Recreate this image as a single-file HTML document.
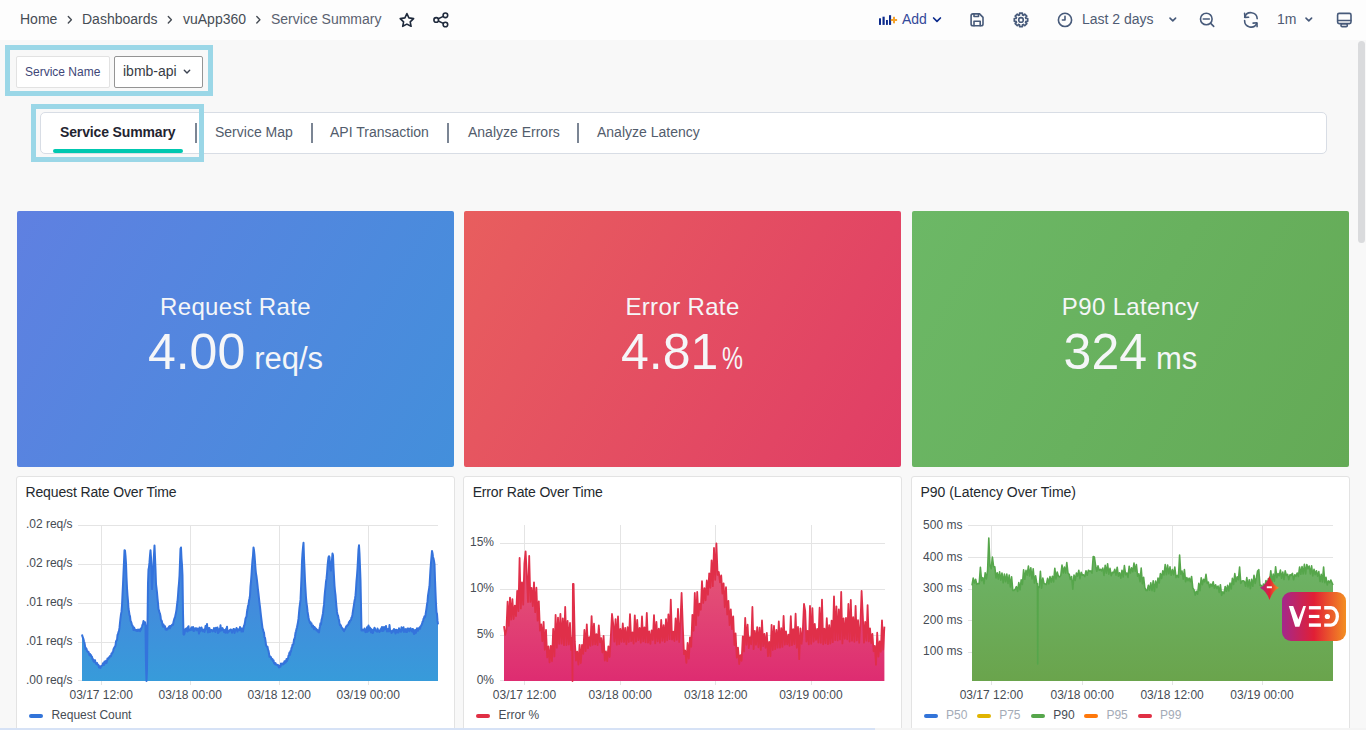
<!DOCTYPE html>
<html><head><meta charset="utf-8">
<style>
*{margin:0;padding:0;box-sizing:border-box}
html,body{width:1366px;height:730px;overflow:hidden}
body{background:#f8f8f8;font-family:"Liberation Sans",sans-serif;position:relative;color:#464c54}
.a{position:absolute;white-space:nowrap}
#hdr{position:absolute;left:0;top:0;width:1366px;height:40px;background:#fdfdfd}
.bc{font-size:14px;line-height:16px;top:11px;color:#464c54}
.chev{top:14px}
.cyan{position:absolute;border:5px solid #9bd7e7}
.tabs{position:absolute;left:40px;top:112px;width:1287px;height:42px;background:#fff;border:1px solid #d8dde5;border-radius:5px}
.tab{font-size:14px;line-height:16px;top:124px;color:#525c6c}
.sep{position:absolute;top:123px;width:2px;height:20px;background:#7b8594}
.stat{position:absolute;top:211px;height:256px;border-radius:2px;color:#f5f6f8;text-align:center}
.st{position:absolute;left:0;right:0;top:82px;font-size:24px;line-height:28px;letter-spacing:0.35px}
.sv{position:absolute;left:0;right:0;top:111px;height:60px;display:flex;justify-content:center;align-items:baseline}
.sv .n{font-size:50px;line-height:60px}
.sv .u{font-size:31px;line-height:40px;margin-left:9px}
.ts{position:absolute;top:476px;height:260px;background:#fff;border:1px solid #e3e3e3;border-radius:3px}
.pt{font-size:14px;line-height:16px;color:#24292e}
.ax{font-size:12px;line-height:14px;color:#464c54}
</style></head><body>
<div id="hdr"></div>
<svg class="a" style="left:0;top:0" width="1366" height="40" viewBox="0 0 1366 40">
<g fill="none" stroke="#464c54" stroke-width="1.4" stroke-linecap="round" stroke-linejoin="round">
<path d="M68.3 16.6 L71.4 19.8 L68.3 23"/>
<path d="M168.3 16.6 L171.4 19.8 L168.3 23"/>
<path d="M256.8 16.6 L259.9 19.8 L256.8 23"/>
</g>
<g fill="none" stroke="#1f2a3c" stroke-width="1.6" stroke-linejoin="round">
<path d="M406.9 13.6 L408.9 17.9 L413.6 18.6 L410.2 21.9 L411.1 26.3 L406.9 24.1 L402.7 26.3 L403.6 21.9 L400.2 18.6 L404.9 17.9 Z"/>
<circle cx="445.4" cy="15.3" r="2.3"/><circle cx="436.2" cy="19.9" r="2.3"/><circle cx="445.4" cy="24.5" r="2.3"/>
<path d="M438.3 18.8 L443.3 16.4 M438.3 21 L443.3 23.4"/>
</g>
<g fill="#0b2a8c"><rect x="879" y="18.3" width="2" height="6.6"/><rect x="882.5" y="16.7" width="2.2" height="8.2"/><rect x="886" y="20" width="1.9" height="4.9"/><rect x="889" y="15.2" width="2.1" height="9.7"/></g>
<g fill="#f5a22a"><rect x="890.8" y="19" width="6.3" height="2"/><rect x="893" y="16.8" width="2" height="6.5"/></g>
<path d="M933.6 18 L937 21.3 L940.4 18" fill="none" stroke="#0b2a8c" stroke-width="1.7" stroke-linecap="round" stroke-linejoin="round"/>
<g fill="none" stroke="#475a7a" stroke-width="1.6" stroke-linecap="round" stroke-linejoin="round">
<path d="M973.4 13.9 L979.6 13.9 L983 17.4 L983 23.9 Q983 25.8 981.1 25.8 L973 25.8 Q971.1 25.8 971.1 23.9 L971.1 15.8 Q971.1 13.9 973 13.9 Z"/>
<path d="M974 14 L974 16.5 L978.5 16.5 L978.5 14"/>
<path d="M974 25.7 L974 21.3 L980.2 21.3 L980.2 25.7"/>
<circle cx="1021" cy="19.9" r="2.3"/>
<path d="M1019.55 15.01 L1019.55 13.15 L1022.45 13.15 L1022.45 15.01 A5.1 5.1 0 0 1 1023.43 15.42 L1024.75 14.10 L1026.80 16.15 L1025.48 17.47 A5.1 5.1 0 0 1 1025.89 18.45 L1027.75 18.45 L1027.75 21.35 L1025.89 21.35 A5.1 5.1 0 0 1 1025.48 22.33 L1026.80 23.65 L1024.75 25.70 L1023.43 24.38 A5.1 5.1 0 0 1 1022.45 24.79 L1022.45 26.65 L1019.55 26.65 L1019.55 24.79 A5.1 5.1 0 0 1 1018.57 24.38 L1017.25 25.70 L1015.20 23.65 L1016.52 22.33 A5.1 5.1 0 0 1 1016.11 21.35 L1014.25 21.35 L1014.25 18.45 L1016.11 18.45 A5.1 5.1 0 0 1 1016.52 17.47 L1015.20 16.15 L1017.25 14.10 L1018.57 15.42 A5.1 5.1 0 0 1 1019.55 15.01 Z"/>
<circle cx="1065" cy="19.9" r="6.6"/>
<path d="M1065 16.3 L1065 20 L1062.4 20"/>
<path d="M1170 18.1 L1172.8 20.9 L1175.6 18.1"/>
<circle cx="1206.3" cy="19" r="5.8"/>
<path d="M1203.3 19 L1209.3 19 M1210.7 23.4 L1213.7 26.4"/>
<path d="M1244.7 17.2 A6.4 6.4 0 0 1 1257.2 18.6"/>
<path d="M1244.6 20.6 A6.4 6.4 0 0 0 1256.8 23.4"/>
<path d="M1244.6 13.3 L1244.9 17.4 L1248.6 17.2"/>
<path d="M1257.1 26.6 L1256.9 22.8 L1253.1 23.1"/>
<path d="M1306 18.1 L1308.8 20.9 L1311.6 18.1"/>
<rect x="1337.6" y="13.4" width="13.4" height="10.2" rx="1.5"/>
<path d="M1337.8 20.5 L1350.8 20.5"/>
<rect x="1341" y="23.8" width="6.3" height="2.8" rx="1.2"/>
</g>
</svg>
<div class="a" style="left:902px;top:11px;font-size:14px;line-height:16px;color:#34499a">Add</div>
<div class="a" style="left:1082px;top:11px;font-size:14px;line-height:16px;color:#4f5b73">Last 2 days</div>
<div class="a" style="left:1277px;top:11px;font-size:14px;line-height:16px;color:#4f5b73">1m</div>
<div class="a bc" style="left:20px">Home</div>
<div class="a bc" style="left:82px">Dashboards</div>
<div class="a bc" style="left:183px">vuApp360</div>
<div class="a bc" style="left:271px;color:#5a6170">Service Summary</div>

<div class="cyan" style="left:5px;top:45px;width:208px;height:51px"></div>
<div class="a" style="left:16px;top:56px;width:94px;height:32px;background:#fff;border:1px solid #e2e2e2;border-radius:2px"></div>
<div class="a" style="left:25px;top:65px;font-size:12px;line-height:14px;color:#3e4677">Service Name</div>
<div class="a" style="left:114px;top:56px;width:89px;height:32px;background:#fff;border:1px solid #949494;border-radius:2px"></div>
<div class="a" style="left:123px;top:63px;font-size:14px;line-height:16px;color:#383c44">ibmb-api</div>
<svg class="a" style="left:180px;top:64px" width="14" height="14" viewBox="180 64 14 14"><path d="M184.3 70.2 L187 72.9 L189.7 70.2" fill="none" stroke="#3b4250" stroke-width="1.4" stroke-linecap="round" stroke-linejoin="round"/></svg>

<div class="tabs"></div>
<div class="cyan" style="left:31px;top:104px;width:173px;height:58px"></div>
<div class="a tab" style="left:60px;font-weight:bold;color:#1f2430;letter-spacing:-0.14px">Service Summary</div>
<div class="a" style="left:53px;top:149px;width:130px;height:4px;border-radius:2px;background:#00c8b0"></div>
<div class="sep" style="left:195px"></div>
<div class="a tab" style="left:215px">Service Map</div>
<div class="sep" style="left:311px"></div>
<div class="a tab" style="left:330px">API Transaction</div>
<div class="sep" style="left:447px"></div>
<div class="a tab" style="left:468px">Analyze Errors</div>
<div class="sep" style="left:577px"></div>
<div class="a tab" style="left:597px">Analyze Latency</div>

<div class="stat" style="left:17px;width:437px;background:linear-gradient(120deg,#5f80e1,#438fdb)"><div class="st">Request Rate</div><div class="sv"><span class="n">4.00</span><span class="u">req/s</span></div></div>
<div class="stat" style="left:464px;width:437px;background:linear-gradient(120deg,#e85e5e,#e03d66)"><div class="st">Error Rate</div><div class="sv"><span class="n">4.81</span><span class="u" style="display:inline-block;transform:scaleX(0.76);transform-origin:left;margin-right:-6px;margin-left:4px">%</span></div></div>
<div class="stat" style="left:912px;width:437px;background:linear-gradient(120deg,#6cb866,#64aa56)"><div class="st">P90 Latency</div><div class="sv"><span class="n">324</span><span class="u">ms</span></div></div>

<div class="ts" style="left:16px;width:439px"></div>
<div class="ts" style="left:463px;width:439px"></div>
<div class="ts" style="left:911px;width:439px"></div>

<!--CHARTS_START-->
<svg class="a" style="left:0;top:470px" width="1366" height="260" viewBox="0 470 1366 260" font-family="Liberation Sans, sans-serif">
<defs>
<linearGradient id="gb" x1="0" y1="540" x2="0" y2="681" gradientUnits="userSpaceOnUse"><stop offset="0" stop-color="#4c7fde"/><stop offset="1" stop-color="#379bda"/></linearGradient>
<linearGradient id="gr" x1="0" y1="543" x2="0" y2="681" gradientUnits="userSpaceOnUse"><stop offset="0" stop-color="#e55f78"/><stop offset="1" stop-color="#de2c71"/></linearGradient>
<linearGradient id="gg" x1="0" y1="540" x2="0" y2="681" gradientUnits="userSpaceOnUse"><stop offset="0" stop-color="#6db66b"/><stop offset="1" stop-color="#6aa44c"/></linearGradient>
<linearGradient id="ved" x1="0" y1="0" x2="1" y2="0"><stop offset="0" stop-color="#a4288c"/><stop offset="0.5" stop-color="#e11f35"/><stop offset="1" stop-color="#f38f22"/></linearGradient>
</defs>
<g font-size="14" fill="#24292e">
<text x="25.5" y="497" letter-spacing="-0.14">Request Rate Over Time</text>
<text x="472.7" y="497" letter-spacing="-0.16">Error Rate Over Time</text>
<text x="920.4" y="497">P90 (Latency Over Time)</text>
</g>
<g stroke="#e4e4e4" stroke-width="1" shape-rendering="crispEdges">
<line x1="78" y1="525" x2="438" y2="525"/><line x1="78" y1="564" x2="438" y2="564"/><line x1="78" y1="603" x2="438" y2="603"/><line x1="78" y1="642" x2="438" y2="642"/>
<line x1="101.5" y1="525" x2="101.5" y2="685"/><line x1="190.5" y1="525" x2="190.5" y2="685"/><line x1="279.5" y1="525" x2="279.5" y2="685"/><line x1="368.5" y1="525" x2="368.5" y2="685"/>
<line x1="500" y1="543" x2="885" y2="543"/><line x1="500" y1="589" x2="885" y2="589"/><line x1="500" y1="635" x2="885" y2="635"/>
<line x1="524.5" y1="525" x2="524.5" y2="685"/><line x1="620.5" y1="525" x2="620.5" y2="685"/><line x1="715.5" y1="525" x2="715.5" y2="685"/><line x1="811.5" y1="525" x2="811.5" y2="685"/>
<line x1="968" y1="525" x2="1333" y2="525"/><line x1="968" y1="557" x2="1333" y2="557"/><line x1="968" y1="589" x2="1333" y2="589"/><line x1="968" y1="620" x2="1333" y2="620"/><line x1="968" y1="652" x2="1333" y2="652"/>
<line x1="991.5" y1="525" x2="991.5" y2="685"/><line x1="1082.5" y1="525" x2="1082.5" y2="685"/><line x1="1172.5" y1="525" x2="1172.5" y2="685"/><line x1="1262.5" y1="525" x2="1262.5" y2="685"/>
</g>
<g stroke="#e4e4e4" shape-rendering="crispEdges">
<line x1="78" y1="680" x2="82" y2="680"/><line x1="500" y1="680" x2="504" y2="680"/>
</g>
<path d="M82.0,681 L82.0,634.5 82.5,636.7 83.0,638.0 83.5,639.2 84.0,641.5 84.5,642.9 85.0,645.8 85.5,649.0 86.0,648.2 86.5,648.9 87.0,650.8 87.5,651.5 88.0,652.1 88.5,651.9 89.0,653.6 89.5,655.2 90.0,654.0 90.5,655.7 91.0,655.1 91.5,656.5 92.0,656.8 92.5,659.3 93.0,659.1 93.5,661.4 94.0,661.7 94.5,661.9 95.0,660.1 95.5,662.5 96.0,663.5 96.5,664.2 97.0,663.0 97.5,664.6 98.0,664.6 98.5,665.2 99.0,667.6 99.5,666.2 100.0,667.5 100.5,667.9 101.0,665.9 101.5,665.9 102.0,665.6 102.5,665.1 103.0,663.3 103.5,664.1 104.0,664.9 104.5,661.5 105.0,663.4 105.5,662.1 106.0,660.9 106.5,663.0 107.0,661.1 107.5,658.4 108.0,659.0 108.5,658.8 109.0,657.3 109.5,657.5 110.0,656.1 110.5,656.1 111.0,656.2 111.5,653.4 112.0,653.6 112.5,652.2 113.0,652.1 113.5,649.3 114.0,648.3 114.5,647.2 115.0,646.7 115.5,645.5 116.0,641.4 116.5,640.4 117.0,640.1 117.5,635.0 118.0,634.0 118.5,631.9 119.0,630.8 119.5,627.7 120.0,622.5 120.5,618.2 121.0,614.1 121.5,611.7 122.0,605.6 122.5,594.6 123.0,584.2 123.5,572.7 124.0,561.9 124.5,550.2 125.0,550.5 125.5,555.8 126.0,563.2 126.5,577.3 127.0,588.1 127.5,595.3 128.0,600.8 128.5,608.7 129.0,611.4 129.5,615.0 130.0,616.1 130.5,620.7 131.0,621.7 131.5,623.0 132.0,625.4 132.5,625.5 133.0,627.2 133.5,630.0 134.0,627.6 134.5,628.5 135.0,630.0 135.5,630.4 136.0,629.9 136.5,630.0 137.0,631.0 137.5,630.9 138.0,629.5 138.5,630.6 139.0,630.8 139.5,629.8 140.0,631.3 140.5,629.0 141.0,629.7 141.5,627.8 142.0,626.5 142.5,624.7 143.0,624.0 143.5,621.0 144.0,622.3 144.5,624.3 145.0,622.2 145.5,625.7 146.0,665.3 146.5,681.0 147.0,669.2 147.5,624.4 148.0,583.2 148.5,569.4 149.0,567.1 149.5,562.2 150.0,555.6 150.5,550.3 151.0,557.5 151.5,571.8 152.0,589.1 152.5,579.2 153.0,571.5 153.5,562.5 154.0,554.5 154.5,545.6 155.0,557.3 155.5,569.3 156.0,584.0 156.5,588.2 157.0,592.7 157.5,598.3 158.0,603.2 158.5,609.0 159.0,610.6 159.5,612.7 160.0,613.6 160.5,616.2 161.0,620.7 161.5,620.3 162.0,621.9 162.5,625.1 163.0,626.8 163.5,624.6 164.0,626.5 164.5,626.7 165.0,626.2 165.5,629.4 166.0,629.3 166.5,629.8 167.0,628.6 167.5,629.4 168.0,628.0 168.5,628.0 169.0,626.6 169.5,626.1 170.0,628.3 170.5,626.0 171.0,626.4 171.5,625.7 172.0,624.9 172.5,624.4 173.0,624.8 173.5,621.9 174.0,620.0 174.5,618.2 175.0,617.4 175.5,614.9 176.0,612.6 176.5,609.6 177.0,605.2 177.5,601.5 178.0,595.5 178.5,588.4 179.0,583.1 179.5,575.8 180.0,562.3 180.5,548.9 181.0,547.5 181.5,558.5 182.0,564.8 182.5,575.9 183.0,612.2 183.5,634.3 184.0,634.6 184.5,633.5 185.0,630.2 185.5,629.0 186.0,630.8 186.5,628.2 187.0,630.0 187.5,631.5 188.0,627.0 188.5,626.2 189.0,630.5 189.5,630.1 190.0,629.6 190.5,630.1 191.0,628.5 191.5,627.3 192.0,629.7 192.5,628.3 193.0,627.0 193.5,630.9 194.0,629.9 194.5,630.7 195.0,628.2 195.5,628.8 196.0,628.2 196.5,628.4 197.0,630.4 197.5,628.6 198.0,630.6 198.5,630.6 199.0,633.6 199.5,627.5 200.0,631.6 200.5,629.8 201.0,630.0 201.5,627.4 202.0,629.2 202.5,631.3 203.0,629.9 203.5,630.1 204.0,629.5 204.5,632.1 205.0,630.0 205.5,626.0 206.0,628.8 206.5,626.5 207.0,624.1 207.5,629.0 208.0,632.4 208.5,630.1 209.0,627.9 209.5,628.3 210.0,632.0 210.5,630.3 211.0,630.1 211.5,629.9 212.0,630.1 212.5,631.4 213.0,631.0 213.5,630.4 214.0,628.1 214.5,630.9 215.0,628.8 215.5,632.0 216.0,627.7 216.5,629.8 217.0,630.0 217.5,627.6 218.0,633.1 218.5,632.6 219.0,629.2 219.5,631.4 220.0,630.7 220.5,625.3 221.0,630.5 221.5,629.9 222.0,630.1 222.5,628.1 223.0,629.5 223.5,629.7 224.0,632.1 224.5,630.6 225.0,630.0 225.5,632.8 226.0,629.0 226.5,629.3 227.0,626.7 227.5,632.8 228.0,631.7 228.5,631.7 229.0,631.2 229.5,630.2 230.0,630.4 230.5,629.5 231.0,629.6 231.5,630.1 232.0,632.7 232.5,631.0 233.0,629.9 233.5,629.0 234.0,628.9 234.5,632.9 235.0,630.9 235.5,630.1 236.0,629.4 236.5,628.0 237.0,629.9 237.5,631.6 238.0,629.3 238.5,629.6 239.0,629.6 239.5,630.2 240.0,627.1 240.5,629.6 241.0,628.5 241.5,631.6 242.0,628.6 242.5,631.0 243.0,631.5 243.5,627.9 244.0,625.8 244.5,624.8 245.0,622.1 245.5,618.6 246.0,617.5 246.5,616.6 247.0,611.8 247.5,609.3 248.0,606.0 248.5,604.8 249.0,600.8 249.5,598.4 250.0,595.6 250.5,586.4 251.0,581.3 251.5,574.8 252.0,566.5 252.5,560.2 253.0,555.6 253.5,547.5 254.0,550.3 254.5,555.0 255.0,561.9 255.5,568.8 256.0,573.8 256.5,576.5 257.0,580.6 257.5,585.1 258.0,590.0 258.5,593.9 259.0,598.7 259.5,603.1 260.0,606.9 260.5,611.5 261.0,616.1 261.5,620.2 262.0,624.1 262.5,628.1 263.0,629.5 263.5,631.7 264.0,632.6 264.5,637.3 265.0,637.7 265.5,640.9 266.0,644.9 266.5,646.2 267.0,646.9 267.5,646.8 268.0,649.6 268.5,650.8 269.0,653.6 269.5,656.8 270.0,656.2 270.5,656.7 271.0,657.4 271.5,659.1 272.0,659.5 272.5,659.1 273.0,660.9 273.5,660.2 274.0,663.0 274.5,663.5 275.0,664.1 275.5,663.1 276.0,664.6 276.5,664.6 277.0,664.8 277.5,665.4 278.0,665.0 278.5,665.4 279.0,667.5 279.5,666.1 280.0,666.2 280.5,666.6 281.0,663.4 281.5,664.0 282.0,664.6 282.5,664.4 283.0,663.3 283.5,664.3 284.0,663.1 284.5,661.3 285.0,661.2 285.5,662.6 286.0,661.8 286.5,659.1 287.0,661.1 287.5,659.1 288.0,658.7 288.5,655.7 289.0,654.6 289.5,652.5 290.0,654.9 290.5,651.0 291.0,651.5 291.5,648.0 292.0,647.6 292.5,644.6 293.0,644.6 293.5,643.8 294.0,639.3 294.5,639.4 295.0,636.5 295.5,632.9 296.0,631.2 296.5,629.1 297.0,627.3 297.5,624.6 298.0,622.1 298.5,618.7 299.0,613.0 299.5,607.7 300.0,604.0 300.5,599.9 301.0,588.8 301.5,576.2 302.0,561.4 302.5,553.4 303.0,547.6 303.5,542.8 304.0,558.0 304.5,568.9 305.0,580.8 305.5,589.2 306.0,597.7 306.5,603.1 307.0,606.4 307.5,611.2 308.0,614.5 308.5,617.5 309.0,620.1 309.5,621.2 310.0,623.1 310.5,622.2 311.0,624.0 311.5,623.3 312.0,626.7 312.5,625.9 313.0,625.6 313.5,627.7 314.0,629.3 314.5,627.0 315.0,627.8 315.5,628.6 316.0,628.6 316.5,630.5 317.0,629.7 317.5,630.1 318.0,631.8 318.5,630.9 319.0,632.4 319.5,628.7 320.0,626.2 320.5,623.2 321.0,624.6 321.5,620.1 322.0,618.4 322.5,615.8 323.0,613.2 323.5,608.0 324.0,604.9 324.5,597.0 325.0,591.4 325.5,587.0 326.0,581.6 326.5,578.7 327.0,573.7 327.5,566.9 328.0,561.4 328.5,557.4 329.0,556.2 329.5,557.2 330.0,565.7 330.5,569.3 331.0,570.6 331.5,563.7 332.0,559.6 332.5,553.6 333.0,555.2 333.5,567.5 334.0,576.9 334.5,585.6 335.0,591.1 335.5,595.1 336.0,601.6 336.5,607.0 337.0,611.9 337.5,614.9 338.0,615.5 338.5,618.3 339.0,620.0 339.5,623.0 340.0,625.2 340.5,624.9 341.0,625.9 341.5,627.5 342.0,627.8 342.5,628.4 343.0,629.8 343.5,629.6 344.0,631.2 344.5,629.8 345.0,629.4 345.5,628.2 346.0,626.9 346.5,626.0 347.0,626.0 347.5,624.9 348.0,625.0 348.5,624.0 349.0,621.9 349.5,622.6 350.0,620.4 350.5,620.4 351.0,620.0 351.5,617.5 352.0,617.1 352.5,614.2 353.0,610.8 353.5,607.6 354.0,604.6 354.5,601.0 355.0,598.7 355.5,595.4 356.0,589.2 356.5,581.0 357.0,575.5 357.5,568.5 358.0,559.4 358.5,549.7 359.0,545.3 359.5,553.9 360.0,566.8 360.5,580.2 361.0,605.3 361.5,630.4 362.0,629.3 362.5,629.7 363.0,630.6 363.5,630.4 364.0,630.2 364.5,628.5 365.0,630.5 365.5,632.1 366.0,631.8 366.5,630.4 367.0,627.2 367.5,631.7 368.0,629.7 368.5,625.4 369.0,630.7 369.5,627.3 370.0,627.7 370.5,628.9 371.0,632.3 371.5,629.3 372.0,630.5 372.5,633.1 373.0,632.9 373.5,629.8 374.0,629.6 374.5,627.7 375.0,628.7 375.5,630.8 376.0,630.7 376.5,630.2 377.0,631.8 377.5,628.6 378.0,629.9 378.5,631.3 379.0,631.1 379.5,631.9 380.0,630.7 380.5,629.4 381.0,630.7 381.5,628.2 382.0,627.0 382.5,631.0 383.0,629.9 383.5,630.6 384.0,626.9 384.5,629.3 385.0,628.9 385.5,628.4 386.0,625.9 386.5,629.4 387.0,631.6 387.5,630.7 388.0,628.9 388.5,630.0 389.0,631.4 389.5,625.0 390.0,629.8 390.5,631.0 391.0,631.2 391.5,633.1 392.0,632.0 392.5,630.6 393.0,630.5 393.5,631.4 394.0,629.0 394.5,629.9 395.0,631.6 395.5,633.5 396.0,629.7 396.5,629.9 397.0,630.4 397.5,632.4 398.0,629.9 398.5,632.6 399.0,628.3 399.5,629.7 400.0,629.6 400.5,631.4 401.0,631.9 401.5,627.3 402.0,628.4 402.5,630.6 403.0,628.8 403.5,627.3 404.0,631.9 404.5,630.9 405.0,630.9 405.5,629.1 406.0,631.9 406.5,629.6 407.0,632.0 407.5,628.4 408.0,628.5 408.5,630.4 409.0,628.7 409.5,631.2 410.0,630.5 410.5,628.3 411.0,630.1 411.5,629.4 412.0,631.6 412.5,628.9 413.0,629.2 413.5,632.2 414.0,634.0 414.5,633.6 415.0,630.1 415.5,630.4 416.0,632.8 416.5,629.8 417.0,628.2 417.5,630.2 418.0,630.8 418.5,628.5 419.0,628.4 419.5,627.6 420.0,628.8 420.5,626.4 421.0,625.9 421.5,625.0 422.0,624.1 422.5,621.9 423.0,621.5 423.5,618.9 424.0,618.1 424.5,616.2 425.0,617.1 425.5,614.7 426.0,611.7 426.5,608.3 427.0,604.6 427.5,601.7 428.0,595.6 428.5,592.3 429.0,589.2 429.5,586.2 430.0,577.4 430.5,569.1 431.0,562.7 431.5,556.8 432.0,551.1 432.5,553.2 433.0,557.0 433.5,558.5 434.0,560.9 434.5,564.1 435.0,579.6 435.5,592.4 436.0,604.3 436.5,612.3 437.0,613.9 437.5,620.9 438.0,624.4 L438.0,681 Z" fill="url(#gb)"/>
<path d="M82.0,634.5 82.5,636.7 83.0,638.0 83.5,639.2 84.0,641.5 84.5,642.9 85.0,645.8 85.5,649.0 86.0,648.2 86.5,648.9 87.0,650.8 87.5,651.5 88.0,652.1 88.5,651.9 89.0,653.6 89.5,655.2 90.0,654.0 90.5,655.7 91.0,655.1 91.5,656.5 92.0,656.8 92.5,659.3 93.0,659.1 93.5,661.4 94.0,661.7 94.5,661.9 95.0,660.1 95.5,662.5 96.0,663.5 96.5,664.2 97.0,663.0 97.5,664.6 98.0,664.6 98.5,665.2 99.0,667.6 99.5,666.2 100.0,667.5 100.5,667.9 101.0,665.9 101.5,665.9 102.0,665.6 102.5,665.1 103.0,663.3 103.5,664.1 104.0,664.9 104.5,661.5 105.0,663.4 105.5,662.1 106.0,660.9 106.5,663.0 107.0,661.1 107.5,658.4 108.0,659.0 108.5,658.8 109.0,657.3 109.5,657.5 110.0,656.1 110.5,656.1 111.0,656.2 111.5,653.4 112.0,653.6 112.5,652.2 113.0,652.1 113.5,649.3 114.0,648.3 114.5,647.2 115.0,646.7 115.5,645.5 116.0,641.4 116.5,640.4 117.0,640.1 117.5,635.0 118.0,634.0 118.5,631.9 119.0,630.8 119.5,627.7 120.0,622.5 120.5,618.2 121.0,614.1 121.5,611.7 122.0,605.6 122.5,594.6 123.0,584.2 123.5,572.7 124.0,561.9 124.5,550.2 125.0,550.5 125.5,555.8 126.0,563.2 126.5,577.3 127.0,588.1 127.5,595.3 128.0,600.8 128.5,608.7 129.0,611.4 129.5,615.0 130.0,616.1 130.5,620.7 131.0,621.7 131.5,623.0 132.0,625.4 132.5,625.5 133.0,627.2 133.5,630.0 134.0,627.6 134.5,628.5 135.0,630.0 135.5,630.4 136.0,629.9 136.5,630.0 137.0,631.0 137.5,630.9 138.0,629.5 138.5,630.6 139.0,630.8 139.5,629.8 140.0,631.3 140.5,629.0 141.0,629.7 141.5,627.8 142.0,626.5 142.5,624.7 143.0,624.0 143.5,621.0 144.0,622.3 144.5,624.3 145.0,622.2 145.5,625.7 146.0,665.3 146.5,681.0 147.0,669.2 147.5,624.4 148.0,583.2 148.5,569.4 149.0,567.1 149.5,562.2 150.0,555.6 150.5,550.3 151.0,557.5 151.5,571.8 152.0,589.1 152.5,579.2 153.0,571.5 153.5,562.5 154.0,554.5 154.5,545.6 155.0,557.3 155.5,569.3 156.0,584.0 156.5,588.2 157.0,592.7 157.5,598.3 158.0,603.2 158.5,609.0 159.0,610.6 159.5,612.7 160.0,613.6 160.5,616.2 161.0,620.7 161.5,620.3 162.0,621.9 162.5,625.1 163.0,626.8 163.5,624.6 164.0,626.5 164.5,626.7 165.0,626.2 165.5,629.4 166.0,629.3 166.5,629.8 167.0,628.6 167.5,629.4 168.0,628.0 168.5,628.0 169.0,626.6 169.5,626.1 170.0,628.3 170.5,626.0 171.0,626.4 171.5,625.7 172.0,624.9 172.5,624.4 173.0,624.8 173.5,621.9 174.0,620.0 174.5,618.2 175.0,617.4 175.5,614.9 176.0,612.6 176.5,609.6 177.0,605.2 177.5,601.5 178.0,595.5 178.5,588.4 179.0,583.1 179.5,575.8 180.0,562.3 180.5,548.9 181.0,547.5 181.5,558.5 182.0,564.8 182.5,575.9 183.0,612.2 183.5,634.3 184.0,634.6 184.5,633.5 185.0,630.2 185.5,629.0 186.0,630.8 186.5,628.2 187.0,630.0 187.5,631.5 188.0,627.0 188.5,626.2 189.0,630.5 189.5,630.1 190.0,629.6 190.5,630.1 191.0,628.5 191.5,627.3 192.0,629.7 192.5,628.3 193.0,627.0 193.5,630.9 194.0,629.9 194.5,630.7 195.0,628.2 195.5,628.8 196.0,628.2 196.5,628.4 197.0,630.4 197.5,628.6 198.0,630.6 198.5,630.6 199.0,633.6 199.5,627.5 200.0,631.6 200.5,629.8 201.0,630.0 201.5,627.4 202.0,629.2 202.5,631.3 203.0,629.9 203.5,630.1 204.0,629.5 204.5,632.1 205.0,630.0 205.5,626.0 206.0,628.8 206.5,626.5 207.0,624.1 207.5,629.0 208.0,632.4 208.5,630.1 209.0,627.9 209.5,628.3 210.0,632.0 210.5,630.3 211.0,630.1 211.5,629.9 212.0,630.1 212.5,631.4 213.0,631.0 213.5,630.4 214.0,628.1 214.5,630.9 215.0,628.8 215.5,632.0 216.0,627.7 216.5,629.8 217.0,630.0 217.5,627.6 218.0,633.1 218.5,632.6 219.0,629.2 219.5,631.4 220.0,630.7 220.5,625.3 221.0,630.5 221.5,629.9 222.0,630.1 222.5,628.1 223.0,629.5 223.5,629.7 224.0,632.1 224.5,630.6 225.0,630.0 225.5,632.8 226.0,629.0 226.5,629.3 227.0,626.7 227.5,632.8 228.0,631.7 228.5,631.7 229.0,631.2 229.5,630.2 230.0,630.4 230.5,629.5 231.0,629.6 231.5,630.1 232.0,632.7 232.5,631.0 233.0,629.9 233.5,629.0 234.0,628.9 234.5,632.9 235.0,630.9 235.5,630.1 236.0,629.4 236.5,628.0 237.0,629.9 237.5,631.6 238.0,629.3 238.5,629.6 239.0,629.6 239.5,630.2 240.0,627.1 240.5,629.6 241.0,628.5 241.5,631.6 242.0,628.6 242.5,631.0 243.0,631.5 243.5,627.9 244.0,625.8 244.5,624.8 245.0,622.1 245.5,618.6 246.0,617.5 246.5,616.6 247.0,611.8 247.5,609.3 248.0,606.0 248.5,604.8 249.0,600.8 249.5,598.4 250.0,595.6 250.5,586.4 251.0,581.3 251.5,574.8 252.0,566.5 252.5,560.2 253.0,555.6 253.5,547.5 254.0,550.3 254.5,555.0 255.0,561.9 255.5,568.8 256.0,573.8 256.5,576.5 257.0,580.6 257.5,585.1 258.0,590.0 258.5,593.9 259.0,598.7 259.5,603.1 260.0,606.9 260.5,611.5 261.0,616.1 261.5,620.2 262.0,624.1 262.5,628.1 263.0,629.5 263.5,631.7 264.0,632.6 264.5,637.3 265.0,637.7 265.5,640.9 266.0,644.9 266.5,646.2 267.0,646.9 267.5,646.8 268.0,649.6 268.5,650.8 269.0,653.6 269.5,656.8 270.0,656.2 270.5,656.7 271.0,657.4 271.5,659.1 272.0,659.5 272.5,659.1 273.0,660.9 273.5,660.2 274.0,663.0 274.5,663.5 275.0,664.1 275.5,663.1 276.0,664.6 276.5,664.6 277.0,664.8 277.5,665.4 278.0,665.0 278.5,665.4 279.0,667.5 279.5,666.1 280.0,666.2 280.5,666.6 281.0,663.4 281.5,664.0 282.0,664.6 282.5,664.4 283.0,663.3 283.5,664.3 284.0,663.1 284.5,661.3 285.0,661.2 285.5,662.6 286.0,661.8 286.5,659.1 287.0,661.1 287.5,659.1 288.0,658.7 288.5,655.7 289.0,654.6 289.5,652.5 290.0,654.9 290.5,651.0 291.0,651.5 291.5,648.0 292.0,647.6 292.5,644.6 293.0,644.6 293.5,643.8 294.0,639.3 294.5,639.4 295.0,636.5 295.5,632.9 296.0,631.2 296.5,629.1 297.0,627.3 297.5,624.6 298.0,622.1 298.5,618.7 299.0,613.0 299.5,607.7 300.0,604.0 300.5,599.9 301.0,588.8 301.5,576.2 302.0,561.4 302.5,553.4 303.0,547.6 303.5,542.8 304.0,558.0 304.5,568.9 305.0,580.8 305.5,589.2 306.0,597.7 306.5,603.1 307.0,606.4 307.5,611.2 308.0,614.5 308.5,617.5 309.0,620.1 309.5,621.2 310.0,623.1 310.5,622.2 311.0,624.0 311.5,623.3 312.0,626.7 312.5,625.9 313.0,625.6 313.5,627.7 314.0,629.3 314.5,627.0 315.0,627.8 315.5,628.6 316.0,628.6 316.5,630.5 317.0,629.7 317.5,630.1 318.0,631.8 318.5,630.9 319.0,632.4 319.5,628.7 320.0,626.2 320.5,623.2 321.0,624.6 321.5,620.1 322.0,618.4 322.5,615.8 323.0,613.2 323.5,608.0 324.0,604.9 324.5,597.0 325.0,591.4 325.5,587.0 326.0,581.6 326.5,578.7 327.0,573.7 327.5,566.9 328.0,561.4 328.5,557.4 329.0,556.2 329.5,557.2 330.0,565.7 330.5,569.3 331.0,570.6 331.5,563.7 332.0,559.6 332.5,553.6 333.0,555.2 333.5,567.5 334.0,576.9 334.5,585.6 335.0,591.1 335.5,595.1 336.0,601.6 336.5,607.0 337.0,611.9 337.5,614.9 338.0,615.5 338.5,618.3 339.0,620.0 339.5,623.0 340.0,625.2 340.5,624.9 341.0,625.9 341.5,627.5 342.0,627.8 342.5,628.4 343.0,629.8 343.5,629.6 344.0,631.2 344.5,629.8 345.0,629.4 345.5,628.2 346.0,626.9 346.5,626.0 347.0,626.0 347.5,624.9 348.0,625.0 348.5,624.0 349.0,621.9 349.5,622.6 350.0,620.4 350.5,620.4 351.0,620.0 351.5,617.5 352.0,617.1 352.5,614.2 353.0,610.8 353.5,607.6 354.0,604.6 354.5,601.0 355.0,598.7 355.5,595.4 356.0,589.2 356.5,581.0 357.0,575.5 357.5,568.5 358.0,559.4 358.5,549.7 359.0,545.3 359.5,553.9 360.0,566.8 360.5,580.2 361.0,605.3 361.5,630.4 362.0,629.3 362.5,629.7 363.0,630.6 363.5,630.4 364.0,630.2 364.5,628.5 365.0,630.5 365.5,632.1 366.0,631.8 366.5,630.4 367.0,627.2 367.5,631.7 368.0,629.7 368.5,625.4 369.0,630.7 369.5,627.3 370.0,627.7 370.5,628.9 371.0,632.3 371.5,629.3 372.0,630.5 372.5,633.1 373.0,632.9 373.5,629.8 374.0,629.6 374.5,627.7 375.0,628.7 375.5,630.8 376.0,630.7 376.5,630.2 377.0,631.8 377.5,628.6 378.0,629.9 378.5,631.3 379.0,631.1 379.5,631.9 380.0,630.7 380.5,629.4 381.0,630.7 381.5,628.2 382.0,627.0 382.5,631.0 383.0,629.9 383.5,630.6 384.0,626.9 384.5,629.3 385.0,628.9 385.5,628.4 386.0,625.9 386.5,629.4 387.0,631.6 387.5,630.7 388.0,628.9 388.5,630.0 389.0,631.4 389.5,625.0 390.0,629.8 390.5,631.0 391.0,631.2 391.5,633.1 392.0,632.0 392.5,630.6 393.0,630.5 393.5,631.4 394.0,629.0 394.5,629.9 395.0,631.6 395.5,633.5 396.0,629.7 396.5,629.9 397.0,630.4 397.5,632.4 398.0,629.9 398.5,632.6 399.0,628.3 399.5,629.7 400.0,629.6 400.5,631.4 401.0,631.9 401.5,627.3 402.0,628.4 402.5,630.6 403.0,628.8 403.5,627.3 404.0,631.9 404.5,630.9 405.0,630.9 405.5,629.1 406.0,631.9 406.5,629.6 407.0,632.0 407.5,628.4 408.0,628.5 408.5,630.4 409.0,628.7 409.5,631.2 410.0,630.5 410.5,628.3 411.0,630.1 411.5,629.4 412.0,631.6 412.5,628.9 413.0,629.2 413.5,632.2 414.0,634.0 414.5,633.6 415.0,630.1 415.5,630.4 416.0,632.8 416.5,629.8 417.0,628.2 417.5,630.2 418.0,630.8 418.5,628.5 419.0,628.4 419.5,627.6 420.0,628.8 420.5,626.4 421.0,625.9 421.5,625.0 422.0,624.1 422.5,621.9 423.0,621.5 423.5,618.9 424.0,618.1 424.5,616.2 425.0,617.1 425.5,614.7 426.0,611.7 426.5,608.3 427.0,604.6 427.5,601.7 428.0,595.6 428.5,592.3 429.0,589.2 429.5,586.2 430.0,577.4 430.5,569.1 431.0,562.7 431.5,556.8 432.0,551.1 432.5,553.2 433.0,557.0 433.5,558.5 434.0,560.9 434.5,564.1 435.0,579.6 435.5,592.4 436.0,604.3 436.5,612.3 437.0,613.9 437.5,620.9 438.0,624.4" fill="none" stroke="#3473dc" stroke-width="2" stroke-linejoin="round"/>
<path d="M504.0,681 L504.0,626.2 505.2,634.9 506.4,630.0 507.6,601.6 508.8,625.8 510.0,597.6 511.2,619.7 512.4,599.1 513.6,619.0 514.8,605.7 516.0,616.2 517.2,590.9 518.4,611.0 519.6,558.0 520.8,608.4 522.0,582.4 523.2,604.7 524.4,563.5 525.6,551.4 526.8,574.9 528.0,602.0 529.2,556.0 530.4,601.9 531.6,587.8 532.8,606.1 534.0,582.4 535.2,612.1 536.4,587.7 537.6,620.7 538.8,601.4 540.0,630.7 541.2,624.3 542.4,641.1 543.6,621.8 544.8,649.8 546.0,629.8 547.2,657.4 548.4,646.4 549.6,662.4 550.8,645.9 552.0,661.3 553.2,628.8 554.4,656.4 555.6,614.9 556.8,647.6 558.0,617.6 559.2,643.8 560.4,613.9 561.6,643.6 562.8,618.3 564.0,645.1 565.2,606.8 566.4,645.0 567.6,620.8 568.8,644.5 570.0,623.0 571.2,650.2 572.4,637.5 572.1,637.5 572.5,681.0 572.9,584.0 573.6,584.0 574.8,641.4 576.0,660.5 577.2,651.7 578.4,664.7 579.6,644.9 580.8,663.0 582.0,645.0 583.2,653.9 584.4,630.0 585.6,651.2 586.8,624.3 588.0,648.3 589.2,637.2 590.4,645.9 591.6,616.1 592.8,644.8 594.0,623.7 595.2,644.4 596.4,634.2 597.6,645.2 598.8,625.4 600.0,642.3 601.2,638.2 602.4,652.5 603.6,635.9 604.8,660.5 606.0,651.5 607.2,661.1 608.4,646.3 609.6,657.0 610.8,636.9 612.0,614.0 613.2,623.9 614.4,641.6 615.6,619.1 616.8,644.6 618.0,616.4 619.2,644.1 620.4,628.8 621.6,641.8 622.8,623.5 624.0,642.0 625.2,627.8 626.4,644.3 627.6,627.2 628.8,642.0 630.0,614.1 631.2,641.2 632.4,632.3 633.6,643.7 634.8,615.4 636.0,641.6 637.2,620.0 638.4,640.2 639.6,627.8 640.8,642.8 642.0,616.5 643.2,641.4 644.4,627.3 645.6,642.4 646.8,613.0 648.0,642.7 649.2,631.4 650.4,643.8 651.6,630.3 652.8,640.0 654.0,615.1 655.2,643.4 656.4,621.8 657.6,641.3 658.8,628.7 660.0,642.8 661.2,619.8 662.4,640.8 663.6,625.1 664.8,642.0 666.0,619.1 667.2,640.3 668.4,614.5 669.6,639.1 670.8,599.7 672.0,639.5 673.2,631.6 674.4,641.0 675.6,618.5 676.8,639.8 678.0,608.8 679.2,642.0 680.4,622.0 681.6,593.0 682.8,626.0 684.0,654.2 685.2,650.5 686.4,662.9 687.6,643.0 688.8,658.7 690.0,637.4 691.2,646.8 692.4,614.8 693.6,630.8 694.8,593.0 696.0,625.2 697.2,592.0 698.4,615.6 699.6,603.7 700.8,609.8 702.0,581.2 703.2,603.0 704.4,588.2 705.6,600.3 706.8,580.5 708.0,594.8 709.2,573.3 710.4,587.8 711.6,560.3 712.8,586.2 714.0,548.0 715.2,579.8 716.4,543.3 717.6,574.9 718.8,572.0 720.0,582.3 721.2,575.4 722.4,593.7 723.6,583.4 724.8,607.3 726.0,587.2 727.2,614.5 728.4,600.8 729.6,625.1 730.8,609.4 732.0,629.2 733.2,616.3 734.4,645.0 735.6,633.5 736.8,657.7 738.0,647.7 739.2,664.0 740.4,655.1 741.6,660.8 742.8,636.3 744.0,651.5 745.2,617.9 746.4,644.8 747.6,624.7 748.8,648.2 750.0,637.2 751.2,644.3 752.4,607.0 753.6,649.1 754.8,630.9 756.0,644.8 757.2,627.1 758.4,647.3 759.6,627.6 760.8,649.9 762.0,620.5 763.2,646.1 764.4,633.8 765.6,647.8 766.8,632.8 768.0,656.1 769.2,641.9 770.4,656.3 771.6,624.8 772.8,650.0 774.0,625.8 775.2,649.1 776.4,630.0 777.6,647.7 778.8,621.5 780.0,647.7 781.2,628.1 782.4,646.9 783.6,616.0 784.8,644.7 786.0,631.4 787.2,644.3 788.4,634.6 789.6,645.8 790.8,616.2 792.0,645.1 793.2,629.1 794.4,644.2 795.6,613.7 796.8,647.8 798.0,626.8 799.2,659.1 800.4,628.3 801.6,643.8 802.8,630.3 804.0,604.0 805.2,610.9 806.4,641.5 807.6,630.8 808.8,644.4 810.0,605.8 811.2,643.8 812.4,608.1 813.6,641.6 814.8,624.0 816.0,639.9 817.2,628.8 818.4,642.6 819.6,607.7 820.8,642.8 822.0,599.6 823.2,644.3 824.4,628.6 825.6,643.3 826.8,618.2 828.0,644.1 829.2,625.1 830.4,643.5 831.6,620.6 832.8,642.2 834.0,596.5 835.2,640.0 836.4,606.4 837.6,640.4 838.8,609.5 840.0,639.5 841.2,592.0 842.4,643.4 843.6,618.3 844.8,638.8 846.0,617.8 847.2,639.3 848.4,604.0 849.6,641.5 850.8,600.0 852.0,640.7 853.2,617.1 854.4,641.8 855.6,605.8 856.8,640.4 858.0,620.1 859.2,642.8 860.4,623.8 861.6,591.0 862.8,615.6 864.0,642.6 865.2,622.0 866.4,640.6 867.6,605.1 868.8,641.4 870.0,628.4 871.2,643.1 872.4,633.8 873.6,651.3 874.8,646.0 876.0,664.8 877.2,632.7 878.4,656.6 879.6,641.5 880.8,651.8 882.0,620.4 883.2,649.6 884.4,626.6 L884.4,681 Z" fill="url(#gr)"/>
<path d="M504.0,626.2 505.2,634.9 506.4,630.0 507.6,601.6 508.8,625.8 510.0,597.6 511.2,619.7 512.4,599.1 513.6,619.0 514.8,605.7 516.0,616.2 517.2,590.9 518.4,611.0 519.6,558.0 520.8,608.4 522.0,582.4 523.2,604.7 524.4,563.5 525.6,551.4 526.8,574.9 528.0,602.0 529.2,556.0 530.4,601.9 531.6,587.8 532.8,606.1 534.0,582.4 535.2,612.1 536.4,587.7 537.6,620.7 538.8,601.4 540.0,630.7 541.2,624.3 542.4,641.1 543.6,621.8 544.8,649.8 546.0,629.8 547.2,657.4 548.4,646.4 549.6,662.4 550.8,645.9 552.0,661.3 553.2,628.8 554.4,656.4 555.6,614.9 556.8,647.6 558.0,617.6 559.2,643.8 560.4,613.9 561.6,643.6 562.8,618.3 564.0,645.1 565.2,606.8 566.4,645.0 567.6,620.8 568.8,644.5 570.0,623.0 571.2,650.2 572.4,637.5 572.1,637.5 572.5,681.0 572.9,584.0 573.6,584.0 574.8,641.4 576.0,660.5 577.2,651.7 578.4,664.7 579.6,644.9 580.8,663.0 582.0,645.0 583.2,653.9 584.4,630.0 585.6,651.2 586.8,624.3 588.0,648.3 589.2,637.2 590.4,645.9 591.6,616.1 592.8,644.8 594.0,623.7 595.2,644.4 596.4,634.2 597.6,645.2 598.8,625.4 600.0,642.3 601.2,638.2 602.4,652.5 603.6,635.9 604.8,660.5 606.0,651.5 607.2,661.1 608.4,646.3 609.6,657.0 610.8,636.9 612.0,614.0 613.2,623.9 614.4,641.6 615.6,619.1 616.8,644.6 618.0,616.4 619.2,644.1 620.4,628.8 621.6,641.8 622.8,623.5 624.0,642.0 625.2,627.8 626.4,644.3 627.6,627.2 628.8,642.0 630.0,614.1 631.2,641.2 632.4,632.3 633.6,643.7 634.8,615.4 636.0,641.6 637.2,620.0 638.4,640.2 639.6,627.8 640.8,642.8 642.0,616.5 643.2,641.4 644.4,627.3 645.6,642.4 646.8,613.0 648.0,642.7 649.2,631.4 650.4,643.8 651.6,630.3 652.8,640.0 654.0,615.1 655.2,643.4 656.4,621.8 657.6,641.3 658.8,628.7 660.0,642.8 661.2,619.8 662.4,640.8 663.6,625.1 664.8,642.0 666.0,619.1 667.2,640.3 668.4,614.5 669.6,639.1 670.8,599.7 672.0,639.5 673.2,631.6 674.4,641.0 675.6,618.5 676.8,639.8 678.0,608.8 679.2,642.0 680.4,622.0 681.6,593.0 682.8,626.0 684.0,654.2 685.2,650.5 686.4,662.9 687.6,643.0 688.8,658.7 690.0,637.4 691.2,646.8 692.4,614.8 693.6,630.8 694.8,593.0 696.0,625.2 697.2,592.0 698.4,615.6 699.6,603.7 700.8,609.8 702.0,581.2 703.2,603.0 704.4,588.2 705.6,600.3 706.8,580.5 708.0,594.8 709.2,573.3 710.4,587.8 711.6,560.3 712.8,586.2 714.0,548.0 715.2,579.8 716.4,543.3 717.6,574.9 718.8,572.0 720.0,582.3 721.2,575.4 722.4,593.7 723.6,583.4 724.8,607.3 726.0,587.2 727.2,614.5 728.4,600.8 729.6,625.1 730.8,609.4 732.0,629.2 733.2,616.3 734.4,645.0 735.6,633.5 736.8,657.7 738.0,647.7 739.2,664.0 740.4,655.1 741.6,660.8 742.8,636.3 744.0,651.5 745.2,617.9 746.4,644.8 747.6,624.7 748.8,648.2 750.0,637.2 751.2,644.3 752.4,607.0 753.6,649.1 754.8,630.9 756.0,644.8 757.2,627.1 758.4,647.3 759.6,627.6 760.8,649.9 762.0,620.5 763.2,646.1 764.4,633.8 765.6,647.8 766.8,632.8 768.0,656.1 769.2,641.9 770.4,656.3 771.6,624.8 772.8,650.0 774.0,625.8 775.2,649.1 776.4,630.0 777.6,647.7 778.8,621.5 780.0,647.7 781.2,628.1 782.4,646.9 783.6,616.0 784.8,644.7 786.0,631.4 787.2,644.3 788.4,634.6 789.6,645.8 790.8,616.2 792.0,645.1 793.2,629.1 794.4,644.2 795.6,613.7 796.8,647.8 798.0,626.8 799.2,659.1 800.4,628.3 801.6,643.8 802.8,630.3 804.0,604.0 805.2,610.9 806.4,641.5 807.6,630.8 808.8,644.4 810.0,605.8 811.2,643.8 812.4,608.1 813.6,641.6 814.8,624.0 816.0,639.9 817.2,628.8 818.4,642.6 819.6,607.7 820.8,642.8 822.0,599.6 823.2,644.3 824.4,628.6 825.6,643.3 826.8,618.2 828.0,644.1 829.2,625.1 830.4,643.5 831.6,620.6 832.8,642.2 834.0,596.5 835.2,640.0 836.4,606.4 837.6,640.4 838.8,609.5 840.0,639.5 841.2,592.0 842.4,643.4 843.6,618.3 844.8,638.8 846.0,617.8 847.2,639.3 848.4,604.0 849.6,641.5 850.8,600.0 852.0,640.7 853.2,617.1 854.4,641.8 855.6,605.8 856.8,640.4 858.0,620.1 859.2,642.8 860.4,623.8 861.6,591.0 862.8,615.6 864.0,642.6 865.2,622.0 866.4,640.6 867.6,605.1 868.8,641.4 870.0,628.4 871.2,643.1 872.4,633.8 873.6,651.3 874.8,646.0 876.0,664.8 877.2,632.7 878.4,656.6 879.6,641.5 880.8,651.8 882.0,620.4 883.2,649.6 884.4,626.6" fill="none" stroke="#e02f49" stroke-width="1.8" stroke-linejoin="round"/>
<path d="M972.0,681 L972.0,585.4 973.2,578.1 974.4,583.0 975.6,579.2 976.8,584.4 978.0,583.6 979.2,583.6 980.4,567.2 981.6,580.7 982.8,577.7 984.0,583.7 985.2,572.9 986.4,578.9 987.6,570.3 988.8,538.0 990.0,565.9 991.2,568.7 992.4,557.0 993.6,566.6 994.8,566.8 996.0,578.0 997.2,572.9 998.4,579.0 999.6,571.8 1000.8,580.2 1002.0,573.0 1003.2,582.8 1004.4,574.1 1005.6,581.8 1006.8,574.1 1008.0,583.4 1009.2,575.1 1010.4,587.0 1011.6,576.9 1012.8,590.4 1014.0,590.4 1015.2,589.2 1016.4,586.7 1017.6,591.4 1018.8,582.6 1020.0,589.8 1021.2,579.9 1022.4,584.5 1023.6,569.8 1024.8,579.3 1026.0,570.4 1027.2,575.1 1028.4,566.1 1029.6,575.9 1030.8,567.7 1032.0,578.9 1033.2,568.8 1034.4,583.0 1035.6,575.8 1036.8,583.6 1037.4,583.6 1037.7,664.0 1038.0,586.9 1038.0,586.9 1039.2,587.5 1040.4,571.3 1041.6,588.2 1042.8,578.0 1044.0,583.4 1045.2,583.9 1046.4,584.4 1047.6,578.4 1048.8,583.9 1050.0,576.6 1051.2,582.1 1052.4,576.2 1053.6,581.9 1054.8,568.2 1056.0,578.9 1057.2,572.0 1058.4,576.2 1059.6,576.9 1060.8,575.4 1062.0,565.1 1063.2,573.0 1064.4,567.1 1065.6,573.0 1066.8,562.6 1068.0,573.2 1069.2,574.3 1070.4,579.5 1071.6,576.6 1072.8,589.2 1074.0,575.0 1075.2,580.4 1076.4,573.1 1077.6,576.1 1078.8,570.4 1080.0,578.7 1081.2,572.2 1082.4,575.1 1083.6,574.9 1084.8,576.6 1086.0,570.7 1087.2,575.3 1088.4,570.2 1089.6,571.3 1090.8,570.9 1092.0,573.1 1093.2,556.6 1094.4,557.0 1095.6,565.5 1096.8,571.3 1098.0,565.9 1099.2,570.3 1100.4,569.3 1101.6,570.8 1102.8,568.1 1104.0,575.4 1105.2,565.3 1106.4,573.2 1107.6,563.8 1108.8,574.1 1110.0,568.4 1111.2,575.7 1112.4,572.4 1113.6,572.7 1114.8,569.3 1116.0,575.2 1117.2,567.2 1118.4,576.2 1119.6,572.7 1120.8,578.2 1122.0,570.2 1123.2,577.0 1124.4,565.5 1125.6,574.7 1126.8,573.0 1128.0,577.4 1129.2,566.2 1130.4,573.0 1131.6,567.9 1132.8,571.7 1134.0,563.0 1135.2,571.1 1136.4,564.5 1137.6,576.1 1138.8,573.8 1140.0,581.7 1141.2,568.1 1142.4,583.8 1143.6,577.2 1144.8,587.5 1146.0,590.4 1147.2,590.5 1148.4,585.2 1149.6,590.2 1150.8,582.9 1152.0,590.7 1153.2,580.9 1154.4,591.4 1155.6,581.0 1156.8,587.6 1158.0,578.0 1159.2,583.0 1160.4,573.5 1161.6,578.5 1162.8,570.9 1164.0,574.9 1165.2,564.5 1166.4,574.7 1167.6,565.0 1168.8,573.8 1170.0,566.9 1171.2,575.3 1172.4,569.6 1173.6,574.6 1174.8,567.0 1176.0,577.7 1177.2,575.4 1178.4,577.4 1179.6,555.0 1180.8,574.2 1182.0,571.1 1183.2,579.2 1184.4,569.5 1185.6,581.7 1186.8,577.6 1188.0,580.7 1189.2,578.2 1190.4,581.8 1191.6,576.5 1192.8,587.8 1194.0,589.8 1195.2,595.1 1196.4,591.2 1197.6,594.1 1198.8,583.3 1200.0,590.6 1201.2,577.7 1202.4,584.7 1203.6,579.2 1204.8,581.8 1206.0,574.4 1207.2,583.5 1208.4,582.0 1209.6,587.4 1210.8,584.0 1212.0,586.5 1213.2,581.8 1214.4,588.3 1215.6,584.7 1216.8,588.4 1218.0,586.0 1219.2,592.4 1220.4,584.7 1221.6,595.4 1222.8,591.9 1224.0,593.6 1225.2,586.5 1226.4,591.3 1227.6,585.4 1228.8,590.9 1230.0,583.1 1231.2,589.0 1232.4,578.4 1233.6,584.5 1234.8,573.5 1236.0,581.6 1237.2,576.9 1238.4,579.7 1239.6,567.1 1240.8,583.4 1242.0,581.0 1243.2,580.8 1244.4,581.4 1245.6,586.3 1246.8,577.6 1248.0,586.9 1249.2,579.8 1250.4,588.6 1251.6,579.2 1252.8,586.3 1254.0,575.4 1255.2,583.4 1256.4,577.7 1257.6,571.0 1258.8,569.7 1260.0,585.5 1261.2,585.3 1262.4,588.0 1263.6,584.0 1264.8,586.5 1266.0,580.5 1267.2,586.5 1268.4,578.5 1269.6,581.3 1270.8,570.7 1272.0,582.9 1273.2,574.1 1274.4,581.3 1275.6,566.7 1276.8,577.7 1278.0,573.6 1279.2,575.8 1280.4,570.1 1281.6,578.3 1282.8,572.1 1284.0,579.5 1285.2,570.9 1286.4,575.5 1287.6,574.3 1288.8,579.6 1290.0,574.7 1291.2,575.5 1292.4,573.4 1293.6,579.8 1294.8,574.8 1296.0,576.3 1297.2,573.0 1298.4,576.4 1299.6,567.0 1300.8,574.3 1302.0,566.5 1303.2,574.0 1304.4,564.3 1305.6,574.0 1306.8,564.5 1308.0,568.7 1309.2,566.0 1310.4,574.0 1311.6,565.9 1312.8,575.9 1314.0,569.3 1315.2,574.6 1316.4,570.7 1317.6,576.1 1318.8,571.6 1320.0,581.5 1321.2,574.4 1322.4,581.9 1323.6,567.0 1324.8,582.8 1326.0,577.3 1327.2,585.0 1328.4,580.9 1329.6,582.7 1330.8,580.1 1333.0,585.0 L1333.0,681 Z" fill="url(#gg)"/>
<path d="M972.0,585.4 973.2,578.1 974.4,583.0 975.6,579.2 976.8,584.4 978.0,583.6 979.2,583.6 980.4,567.2 981.6,580.7 982.8,577.7 984.0,583.7 985.2,572.9 986.4,578.9 987.6,570.3 988.8,538.0 990.0,565.9 991.2,568.7 992.4,557.0 993.6,566.6 994.8,566.8 996.0,578.0 997.2,572.9 998.4,579.0 999.6,571.8 1000.8,580.2 1002.0,573.0 1003.2,582.8 1004.4,574.1 1005.6,581.8 1006.8,574.1 1008.0,583.4 1009.2,575.1 1010.4,587.0 1011.6,576.9 1012.8,590.4 1014.0,590.4 1015.2,589.2 1016.4,586.7 1017.6,591.4 1018.8,582.6 1020.0,589.8 1021.2,579.9 1022.4,584.5 1023.6,569.8 1024.8,579.3 1026.0,570.4 1027.2,575.1 1028.4,566.1 1029.6,575.9 1030.8,567.7 1032.0,578.9 1033.2,568.8 1034.4,583.0 1035.6,575.8 1036.8,583.6 1037.4,583.6 1037.7,664.0 1038.0,586.9 1038.0,586.9 1039.2,587.5 1040.4,571.3 1041.6,588.2 1042.8,578.0 1044.0,583.4 1045.2,583.9 1046.4,584.4 1047.6,578.4 1048.8,583.9 1050.0,576.6 1051.2,582.1 1052.4,576.2 1053.6,581.9 1054.8,568.2 1056.0,578.9 1057.2,572.0 1058.4,576.2 1059.6,576.9 1060.8,575.4 1062.0,565.1 1063.2,573.0 1064.4,567.1 1065.6,573.0 1066.8,562.6 1068.0,573.2 1069.2,574.3 1070.4,579.5 1071.6,576.6 1072.8,589.2 1074.0,575.0 1075.2,580.4 1076.4,573.1 1077.6,576.1 1078.8,570.4 1080.0,578.7 1081.2,572.2 1082.4,575.1 1083.6,574.9 1084.8,576.6 1086.0,570.7 1087.2,575.3 1088.4,570.2 1089.6,571.3 1090.8,570.9 1092.0,573.1 1093.2,556.6 1094.4,557.0 1095.6,565.5 1096.8,571.3 1098.0,565.9 1099.2,570.3 1100.4,569.3 1101.6,570.8 1102.8,568.1 1104.0,575.4 1105.2,565.3 1106.4,573.2 1107.6,563.8 1108.8,574.1 1110.0,568.4 1111.2,575.7 1112.4,572.4 1113.6,572.7 1114.8,569.3 1116.0,575.2 1117.2,567.2 1118.4,576.2 1119.6,572.7 1120.8,578.2 1122.0,570.2 1123.2,577.0 1124.4,565.5 1125.6,574.7 1126.8,573.0 1128.0,577.4 1129.2,566.2 1130.4,573.0 1131.6,567.9 1132.8,571.7 1134.0,563.0 1135.2,571.1 1136.4,564.5 1137.6,576.1 1138.8,573.8 1140.0,581.7 1141.2,568.1 1142.4,583.8 1143.6,577.2 1144.8,587.5 1146.0,590.4 1147.2,590.5 1148.4,585.2 1149.6,590.2 1150.8,582.9 1152.0,590.7 1153.2,580.9 1154.4,591.4 1155.6,581.0 1156.8,587.6 1158.0,578.0 1159.2,583.0 1160.4,573.5 1161.6,578.5 1162.8,570.9 1164.0,574.9 1165.2,564.5 1166.4,574.7 1167.6,565.0 1168.8,573.8 1170.0,566.9 1171.2,575.3 1172.4,569.6 1173.6,574.6 1174.8,567.0 1176.0,577.7 1177.2,575.4 1178.4,577.4 1179.6,555.0 1180.8,574.2 1182.0,571.1 1183.2,579.2 1184.4,569.5 1185.6,581.7 1186.8,577.6 1188.0,580.7 1189.2,578.2 1190.4,581.8 1191.6,576.5 1192.8,587.8 1194.0,589.8 1195.2,595.1 1196.4,591.2 1197.6,594.1 1198.8,583.3 1200.0,590.6 1201.2,577.7 1202.4,584.7 1203.6,579.2 1204.8,581.8 1206.0,574.4 1207.2,583.5 1208.4,582.0 1209.6,587.4 1210.8,584.0 1212.0,586.5 1213.2,581.8 1214.4,588.3 1215.6,584.7 1216.8,588.4 1218.0,586.0 1219.2,592.4 1220.4,584.7 1221.6,595.4 1222.8,591.9 1224.0,593.6 1225.2,586.5 1226.4,591.3 1227.6,585.4 1228.8,590.9 1230.0,583.1 1231.2,589.0 1232.4,578.4 1233.6,584.5 1234.8,573.5 1236.0,581.6 1237.2,576.9 1238.4,579.7 1239.6,567.1 1240.8,583.4 1242.0,581.0 1243.2,580.8 1244.4,581.4 1245.6,586.3 1246.8,577.6 1248.0,586.9 1249.2,579.8 1250.4,588.6 1251.6,579.2 1252.8,586.3 1254.0,575.4 1255.2,583.4 1256.4,577.7 1257.6,571.0 1258.8,569.7 1260.0,585.5 1261.2,585.3 1262.4,588.0 1263.6,584.0 1264.8,586.5 1266.0,580.5 1267.2,586.5 1268.4,578.5 1269.6,581.3 1270.8,570.7 1272.0,582.9 1273.2,574.1 1274.4,581.3 1275.6,566.7 1276.8,577.7 1278.0,573.6 1279.2,575.8 1280.4,570.1 1281.6,578.3 1282.8,572.1 1284.0,579.5 1285.2,570.9 1286.4,575.5 1287.6,574.3 1288.8,579.6 1290.0,574.7 1291.2,575.5 1292.4,573.4 1293.6,579.8 1294.8,574.8 1296.0,576.3 1297.2,573.0 1298.4,576.4 1299.6,567.0 1300.8,574.3 1302.0,566.5 1303.2,574.0 1304.4,564.3 1305.6,574.0 1306.8,564.5 1308.0,568.7 1309.2,566.0 1310.4,574.0 1311.6,565.9 1312.8,575.9 1314.0,569.3 1315.2,574.6 1316.4,570.7 1317.6,576.1 1318.8,571.6 1320.0,581.5 1321.2,574.4 1322.4,581.9 1323.6,567.0 1324.8,582.8 1326.0,577.3 1327.2,585.0 1328.4,580.9 1329.6,582.7 1330.8,580.1 1333.0,585.0" fill="none" stroke="#56a64b" stroke-width="1.6" stroke-linejoin="round"/>
<g font-size="12" fill="#464c54">
<text x="72.6" y="528.3" text-anchor="end">.02 req/s</text><text x="72.6" y="567.3" text-anchor="end">.02 req/s</text><text x="72.6" y="606.2" text-anchor="end">.01 req/s</text><text x="72.6" y="645.2" text-anchor="end">.01 req/s</text><text x="72.6" y="684" text-anchor="end">.00 req/s</text>
<text x="101.2" y="698.6" text-anchor="middle">03/17 12:00</text><text x="190.2" y="698.6" text-anchor="middle">03/18 00:00</text><text x="279.2" y="698.6" text-anchor="middle">03/18 12:00</text><text x="368.2" y="698.6" text-anchor="middle">03/19 00:00</text>
<text x="494" y="545.7" text-anchor="end">15%</text><text x="494" y="592.3" text-anchor="end">10%</text><text x="494" y="638.2" text-anchor="end">5%</text><text x="494" y="683.8" text-anchor="end">0%</text>
<text x="524.5" y="698.6" text-anchor="middle">03/17 12:00</text><text x="620.3" y="698.6" text-anchor="middle">03/18 00:00</text><text x="715.8" y="698.6" text-anchor="middle">03/18 12:00</text><text x="810.9" y="698.6" text-anchor="middle">03/19 00:00</text>
<text x="962.4" y="528.6" text-anchor="end">500 ms</text><text x="962.4" y="560.6" text-anchor="end">400 ms</text><text x="962.4" y="592.2" text-anchor="end">300 ms</text><text x="962.4" y="623.7" text-anchor="end">200 ms</text><text x="962.4" y="655.2" text-anchor="end">100 ms</text>
<text x="991.4" y="698.6" text-anchor="middle">03/17 12:00</text><text x="1082.2" y="698.6" text-anchor="middle">03/18 00:00</text><text x="1172.1" y="698.6" text-anchor="middle">03/18 12:00</text><text x="1262" y="698.6" text-anchor="middle">03/19 00:00</text>
<rect x="29" y="714" width="14" height="4" rx="2" fill="#3274d9"/><text x="51.4" y="719">Request Count</text>
<rect x="476" y="714" width="14" height="4" rx="2" fill="#e02f44"/><text x="498.5" y="719">Error %</text>
<rect x="924" y="714" width="14" height="4" rx="2" fill="#3274d9"/><text x="946" y="719" fill="#a4abb7">P50</text>
<rect x="977" y="714" width="14" height="4" rx="2" fill="#e0b400"/><text x="999.2" y="719" fill="#a4abb7">P75</text>
<rect x="1031" y="714" width="14" height="4" rx="2" fill="#56a64b"/><text x="1053.3" y="719" fill="#464c54">P90</text>
<rect x="1084" y="714" width="14" height="4" rx="2" fill="#ff780a"/><text x="1106.4" y="719" fill="#a4abb7">P95</text>
<rect x="1138" y="714" width="14" height="4" rx="2" fill="#e02f44"/><text x="1160" y="719" fill="#a4abb7">P99</text>
</g>
<path d="M1269.5 575.9 Q1272.6 584.6 1278.9 587.8 Q1272.6 591 1269.5 599.9 Q1266.4 591 1260 587.8 Q1266.4 584.6 1269.5 575.9 Z" fill="url(#ved)"/>
<rect x="1266.8" y="586.3" width="5.1" height="1.9" fill="#fff"/>
<rect x="1282" y="592" width="64" height="49" rx="9" fill="url(#ved)"/>
<g fill="#fff">
<path d="M1288.8 606 L1293.2 606 L1298.4 619.5 L1303.3 606 L1306 606 L1299.4 626.8 L1295.2 626.8 Z"/>
<rect x="1308.9" y="606.1" width="12" height="3.3"/>
<rect x="1308.9" y="614.9" width="10.5" height="3.1"/>
<rect x="1308.9" y="623.4" width="12" height="3.4"/>
<path d="M1324.2 606.1 L1331 606.1 A8 10.35 0 0 1 1331 626.8 L1324.2 626.8 L1324.2 623.4 L1331 623.4 A4.7 6.95 0 0 0 1331 609.5 L1324.2 609.5 Z"/>
<circle cx="1327.4" cy="616.5" r="2.6"/>
</g>
</svg>
<!--CHARTS_END-->
<div class="a" style="left:1358px;top:41px;width:7px;height:202px;background:#dadbdd;border-radius:4px"></div>
<div class="a" style="left:0;top:728px;width:875px;height:2px;background:#d6e2f6"></div>
<div class="a" style="left:875px;top:728px;width:491px;height:2px;background:#f4f4f4"></div>
</body></html>
